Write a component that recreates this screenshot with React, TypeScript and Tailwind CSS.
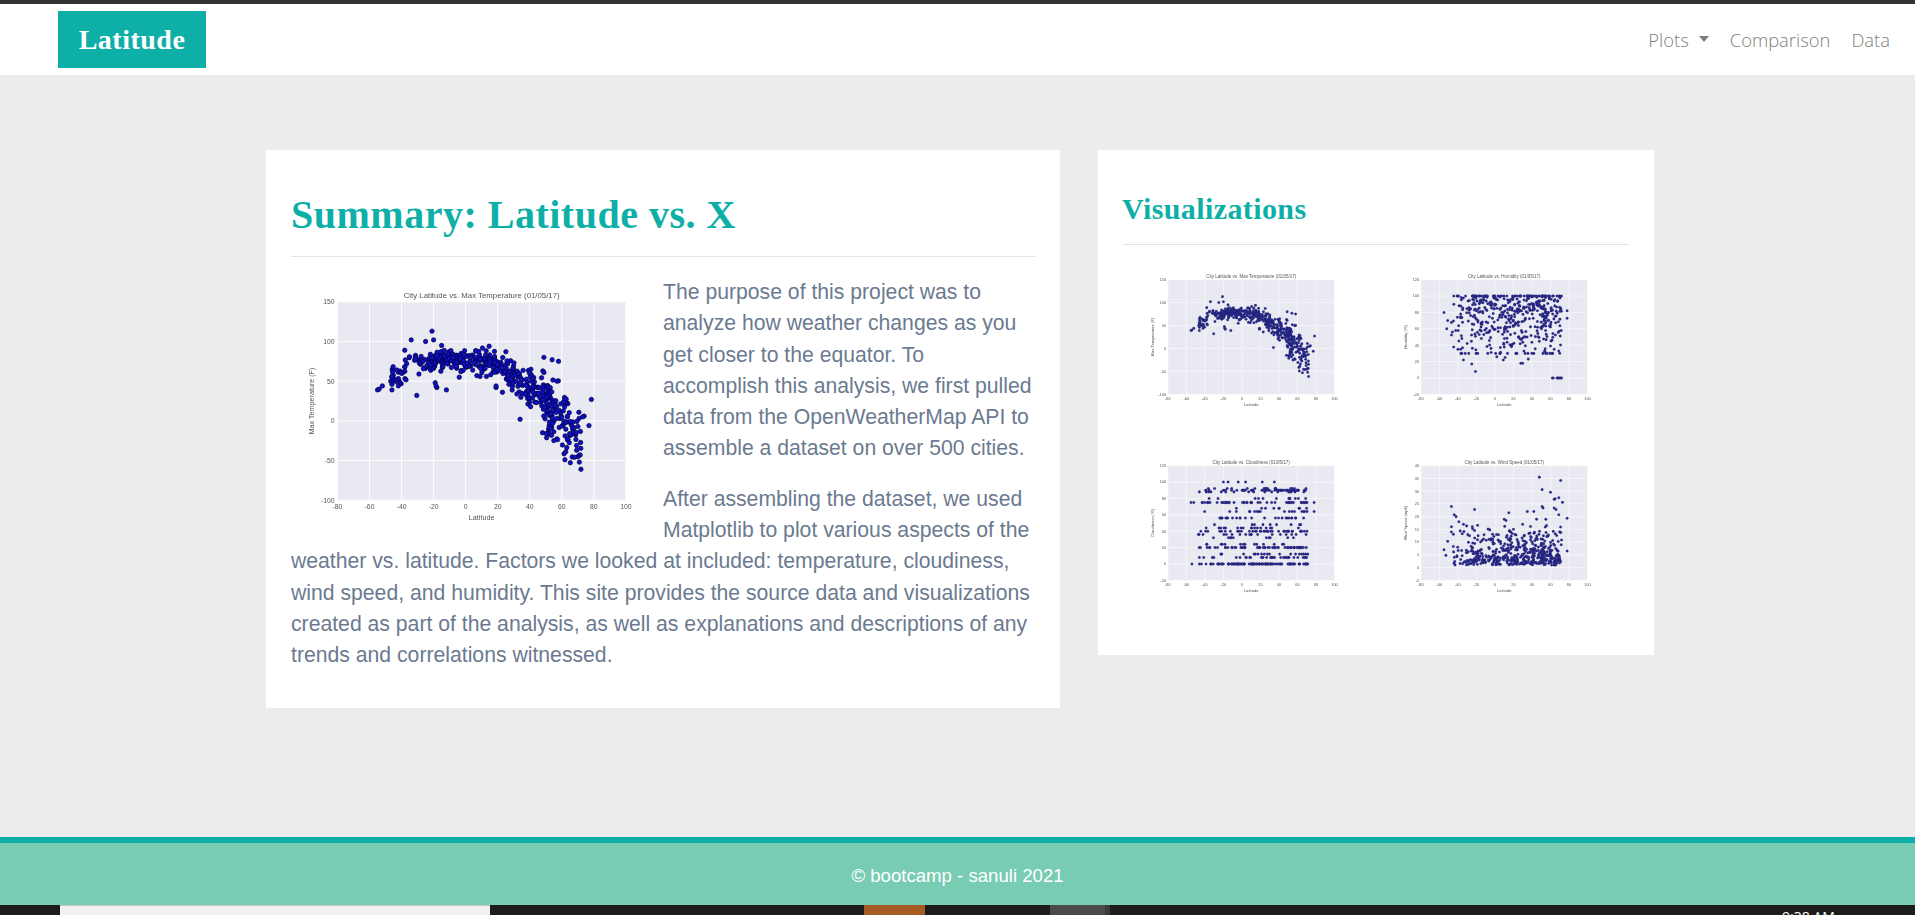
type Pt = [number, number];

// small seeded generator so the scatter clouds stay put between renders
function makeRand(seed: number) {
  let s = seed;
  return () => {
    s = (s * 1664525 + 1013904223) % 4294967296;
    return s / 4294967296;
  };
}

function gauss(r: () => number) {
  return (r() + r() + r() + r() - 2) * 1.73;
}

function makeLats(seed: number) {
  const r = makeRand(seed);
  const out: number[] = [];
  for (let i = 0; i < 500; i++) {
    const k = r();
    if (k < 0.03) out.push(-47 + r() * 10);
    else if (k < 0.1) out.push(-38 + r() * 13);
    else if (k < 0.42) out.push(-25 + r() * 38);
    else if (k < 0.8) out.push(13 + r() * 42);
    else out.push(50 + r() * 22);
  }
  return out;
}

function tempCurve(lat: number) {
  const knots: Pt[] = [
    [-55, 40],
    [-40, 64],
    [-25, 74],
    [-5, 78],
    [15, 76],
    [30, 58],
    [40, 40],
    [50, 26],
    [60, 6],
    [72, -25],
  ];
  for (let i = 1; i < knots.length; i++) {
    if (lat <= knots[i][0]) {
      const [x0, y0] = knots[i - 1];
      const [x1, y1] = knots[i];
      return y0 + ((lat - x0) / (x1 - x0)) * (y1 - y0);
    }
  }
  return -30;
}

function tempPoints(): Pt[] {
  const r = makeRand(7);
  const pts: Pt[] = makeLats(11).map((lat) => {
    const sigma = lat > 48 ? 18 : lat > 25 ? 11 : 7.5;
    return [lat, tempCurve(lat) + gauss(r) * sigma];
  });
  return pts.concat([
    [-21, 113], [-34, 102], [-25, 100], [-20, 102], [-38, 89], [-15, 95], [54, 77], [58, 75],
    [-30.5, 32], [-55, 39], [-54, 40], [-52, 44], [-46, 39], [-46, 46], [-42, 44], [-12, 39],
    [-19, 48], [-18, 42], [-18.5, 44], [34, 2], [78.5, 27], [77, -6], [72, -61], [48, -15],
    [57, 50], [71, -52], [68, -46], [62, -49], [62.5, -39], [74, 6], [73, 5], [-43, 64],
    [7, 57], [9, 56], [13, 56], [19, 42], [23, 36], [27, 46], [-4, 55], [-3, 62], [19, 44],
    [-46, 55], [-45.5, 54], [-46, 56], [-40, 60], [-38, 68],
  ]);
}

function humidityPoints(): Pt[] {
  const r = makeRand(21);
  const pts: Pt[] = makeLats(31).map((lat) => {
    if (r() < 0.15) return [lat, 100];
    return [lat, Math.max(30, 99 - Math.abs(gauss(r)) * 33)];
  });
  return pts.concat([
    [-21, 8], [-25, 17], [-34, 22], [-40, 35], [-37, 35], [-35, 37], [-39, 45], [-30, 42], [-46, 56],
    [-55, 80], [-52, 60], [-51, 70], [-21, 51], [-17, 53], [2, 26], [9, 22], [11, 25], [28, 18],
    [30, 18], [36, 23], [62, 0], [63, 0], [67, 0], [68, 0], [69, 0], [70, 0], [71, 0], [72, 0],
    [78, 82], [78, 73], [60, 39], [64, 35], [69, 33],
  ]);
}

function cloudPoints(): Pt[] {
  const r = makeRand(41);
  const levels = [
    0, 0, 0, 0, 0, 0, 0, 0, 8, 8, 12, 20, 20, 20, 20, 24, 32, 36, 40, 40, 40, 44, 48, 56, 56, 64, 68, 75, 75, 75, 75,
    80, 88, 90, 90, 90, 90, 92,
  ];
  const pts: Pt[] = makeLats(51).map((lat) => {
    const lvl = levels[Math.floor(r() * levels.length)];
    return [lat, lvl];
  });
  return pts.concat([
    [-20, 100], [-15, 100], [-4, 100], [4, 100], [22, 100], [35, 100], [-46, 88], [-55, 75], [-52, 75],
    [-43, 75], [78, 75], [78, 64], [-54, 0], [-46, 0], [-46, 8], [-38, 24], [-47, 36], [-42, 36],
  ]);
}

function windPoints(): Pt[] {
  const r = makeRand(61);
  const pts: Pt[] = makeLats(71).map((lat) => {
    let v = 1 - Math.log(1 - r() * 0.96) * 5.6;
    if (v > 17) v = 3 + r() * 13;
    return [lat, v];
  });
  return pts.concat([
    [48, 35.5], [71, 34.2], [51, 30.6], [60, 29.6], [65, 27], [64, 26.8], [69, 27.4], [73, 25.6],
    [-47, 24], [-22, 22.8], [51, 24], [52, 23.4], [64, 23.4], [66, 22.8], [15, 21.5], [35, 22], [42, 22],
    [-44, 20.7], [-42, 20], [78, 19.4], [69, 20.7], [-55, 7], [-53, 4.8], [-51, 10.3], [78, 6.5],
    [-47, 16], [-47, 14], [-39, 18], [-34, 17], [10, 19], [12, 18.5], [45, 19], [55, 19], [30, 17],
  ]);
}

type ChartProps = {
  title: string;
  ylabel: string;
  yticks: number[];
  points: Pt[];
  className: string;
  dotClass: string;
};

// matplotlib-style figure, 6x4 with the usual subplot margins
function Chart({ title, ylabel, yticks, points, className, dotClass }: ChartProps) {
  const W = 372;
  const H = 248;
  const left = 46.5;
  const right = 334.8;
  const top = 24.8;
  const bottom = 223.2;
  const ymin = yticks[0];
  const ymax = yticks[yticks.length - 1];
  const xticks = [-80, -60, -40, -20, 0, 20, 40, 60, 80, 100];
  const sx = (v: number) => left + ((v + 80) / 180) * (right - left);
  const sy = (v: number) => bottom - ((v - ymin) / (ymax - ymin)) * (bottom - top);
  return (
    <svg viewBox={`0 0 ${W} ${H}`} className={className} fontFamily="'Liberation Sans', sans-serif">
      <rect x={left} y={top} width={right - left} height={bottom - top} fill="#e9e9f2" />
      {xticks.map((t) => (
        <line key={t} x1={sx(t)} x2={sx(t)} y1={top} y2={bottom} stroke="#fff" strokeWidth="0.9" />
      ))}
      {yticks.map((t) => (
        <line key={t} x1={left} x2={right} y1={sy(t)} y2={sy(t)} stroke="#fff" strokeWidth="0.9" />
      ))}
      <g className={dotClass}>
        {points.map(([x, y], i) => (
          <circle key={i} cx={sx(x)} cy={sy(y)} r="2.2" />
        ))}
      </g>
      <g fill="#555" fontSize="6.8">
        {xticks.map((t) => (
          <text key={t} x={sx(t)} y={bottom + 9} textAnchor="middle">
            {t}
          </text>
        ))}
        {yticks.map((t) => (
          <text key={t} x={left - 3} y={sy(t) + 2.4} textAnchor="end">
            {t}
          </text>
        ))}
      </g>
      <text x={(left + right) / 2} y={top - 3.5} textAnchor="middle" fontSize="7.8" fill="#555">
        {title}
      </text>
      <text x={(left + right) / 2} y={bottom + 20} textAnchor="middle" fontSize="7.2" fill="#555">
        Latitude
      </text>
      <text
        transform={`translate(${left - 24} ${(top + bottom) / 2}) rotate(-90)`}
        textAnchor="middle"
        fontSize="7.2"
        fill="#555"
      >
        {ylabel}
      </text>
    </svg>
  );
}

const tempTicks = [-100, -50, 0, 50, 100, 150];
const pctTicks = [-20, 0, 20, 40, 60, 80, 100, 120];
const windTicks = [-5, 0, 5, 10, 15, 20, 25, 30, 35, 40];

const smallDots = "fill-[#08087a] stroke-[#000050] [stroke-width:0.4] opacity-85";
const bigDots = "fill-[#1010c4] stroke-[#000048] [stroke-width:0.7]";

const thumbs = [
  { title: "City Latitude vs. Max Temperature (01/05/17)", ylabel: "Max Temperature (F)", yticks: tempTicks, points: tempPoints() },
  { title: "City Latitude vs. Humidity (01/05/17)", ylabel: "Humidity (%)", yticks: pctTicks, points: humidityPoints() },
  { title: "City Latitude vs. Cloudiness (01/05/17)", ylabel: "Cloudiness (%)", yticks: pctTicks, points: cloudPoints() },
  { title: "City Latitude vs. Wind Speed (01/05/17)", ylabel: "Wind Speed (mph)", yticks: windTicks, points: windPoints() },
];

export default function App() {
  return (
    <div className="h-[915px] overflow-hidden flex flex-col bg-[#ececec] font-['Liberation_Sans',sans-serif]">
      <div className="h-[4px] bg-[#333333]" />
      <nav className="h-[71px] bg-white flex items-center justify-between pl-[58px] pr-[25px]">
        <a className="h-[57px] w-[148px] bg-[#0dafa7] text-white flex items-center justify-center font-['Liberation_Serif',serif] font-bold text-[28px] tracking-[0.5px]">
          Latitude
        </a>
        <div className="flex items-center gap-[21px] text-[18.4px] text-[#808080] font-['Open_Sans',sans-serif] font-light">
          <span className="flex items-center gap-[10px]">
            Plots
            <span className="w-0 h-0 border-x-[5px] border-x-transparent border-t-[6px] border-t-[#808080]" />
          </span>
          <span>Comparison</span>
          <span>Data</span>
        </div>
      </nav>

      <main className="flex-1 flex items-start gap-[38px] pl-[266px] pt-[75px]">
        <section className="w-[794px] h-[558px] bg-white px-[25px] pt-[42px]">
          <h2 className="font-['Liberation_Serif',serif] font-bold text-[40px] leading-[46px] tracking-[0.5px] text-[#0dafa7]">
            Summary: Latitude vs. X
          </h2>
          <hr className="mt-[18px] border-[#e3e3e3]" />
          <div className="mt-[19px] text-[21.2px] leading-[31.3px] text-[#6b7a90]">
            <Chart
              title="City Latitude vs. Max Temperature (01/05/17)"
              ylabel="Max Temperature (F)"
              yticks={tempTicks}
              points={tempPoints()}
              className="float-left w-[372px] h-[248px] mt-[1px] blur-[0.5px]"
              dotClass={bigDots}
            />
            <p className="mb-[19px]">
              The purpose of this project was to analyze how weather changes as you get closer to the equator. To
              accomplish this analysis, we first pulled data from the OpenWeatherMap API to assemble a dataset on over
              500 cities.
            </p>
            <p>
              After assembling the dataset, we used Matplotlib to plot various aspects of the weather vs. latitude.
              Factors we looked at included: temperature, cloudiness, wind speed, and humidity. This site provides the
              source data and visualizations created as part of the analysis, as well as explanations and descriptions
              of any trends and correlations witnessed.
            </p>
          </div>
        </section>

        <aside className="w-[556px] h-[505px] bg-white pl-[24px] pr-[25px] pt-[42px]">
          <h3 className="font-['Liberation_Serif',serif] font-bold text-[30px] leading-[34px] tracking-[0.4px] text-[#0dafa7]">
            Visualizations
          </h3>
          <hr className="mt-[18px] ml-[1px] border-[#e3e3e3]" />
          <div className="mt-[20px] ml-[1px] grid grid-cols-2 gap-y-[42px]">
            {thumbs.map((t) => (
              <div key={t.title} className="px-[18px]">
                <Chart {...t} className="w-[215px] h-[144px] blur-[0.7px]" dotClass={smallDots} />
              </div>
            ))}
          </div>
        </aside>
      </main>

      <footer className="h-[68px] pt-[4px] bg-[#78ccb4] border-t-[6px] border-[#0dafa7] flex items-center justify-center text-white text-[18.6px]">
        © bootcamp - sanuli 2021
      </footer>

      <div className="h-[10px] bg-[#1c1c1c] flex relative overflow-hidden">
        <div className="ml-[60px] w-[430px] bg-[#f1f1f1] border-t border-[#c4c4c4]" />
        <div className="ml-[374px] w-[61px] bg-[#a45c24]" />
        <div className="ml-[125px] w-[60px] bg-[#4a4a4a] border-r-[5px] border-[#3a3a3a]" />
        <span className="absolute left-[1782px] top-[4px] text-white text-[14px] leading-[16px] font-['Open_Sans',sans-serif]">
          9:38 AM
        </span>
      </div>
    </div>
  );
}
